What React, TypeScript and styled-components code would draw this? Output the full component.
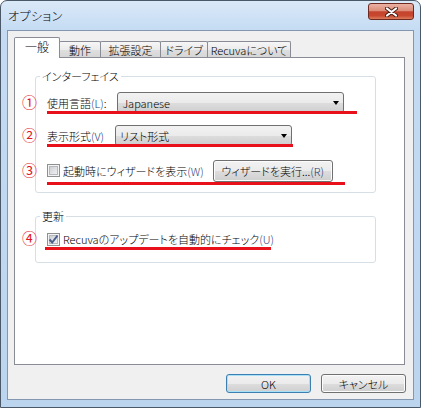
import styled, { createGlobalStyle } from 'styled-components'

const GlobalStyle = createGlobalStyle`
  html, body {
    margin: 0;
    padding: 0;
    background: #fff;
  }
  body {
    font-family: "Noto Sans CJK JP", "Noto Sans", sans-serif;
    font-size: 11px;
    font-weight: 300;
    color: #000;
    font-feature-settings: "palt" 1;
  }
`

const Window = styled.div`
  box-sizing: border-box;
  width: 421px;
  height: 408px;
  display: flex;
  flex-direction: column;
  padding: 0 6px 7px;
  border: 1px solid #4b5868;
  border-radius: 7px 7px 0 0;
  background: linear-gradient(to bottom, #dae9f8 0, #c4dbf3 30px, #bcd5ef 100%);
`

const TitleBar = styled.div`
  height: 29px;
  display: flex;
  justify-content: space-between;
  align-items: flex-start;
`

const Title = styled.span`
  line-height: 29px;
  padding-left: 1px;
  font-size: 12px;
  letter-spacing: 0.4px;
`

const CloseButton = styled.div`
  box-sizing: border-box;
  width: 46px;
  height: 17px;
  margin-top: 2px;
  border: 1px solid #6e2a20;
  border-radius: 3px;
  display: flex;
  align-items: center;
  justify-content: center;
  background: linear-gradient(
    to bottom,
    #eab1a3 0%,
    #dc8d79 45%,
    #c4432c 52%,
    #c8482f 78%,
    #dc7d5f 100%
  );
`

const Client = styled.div`
  flex: 1;
  display: flex;
  flex-direction: column;
  background: #f0f0f0;
  border: 1px solid #8397b0;
  padding: 6px 8px 6px 6px;
`

const TabStrip = styled.div`
  display: flex;
  align-items: flex-end;
  height: 20px;
  position: relative;
  z-index: 1;
`

const Tab = styled.div<{ $active?: boolean; $w: number }>`
  box-sizing: border-box;
  width: ${(p) => p.$w}px;
  height: ${(p) => (p.$active ? 21 : 16)}px;
  margin-bottom: ${(p) => (p.$active ? -1 : 0)}px;
  padding-bottom: ${(p) => (p.$active ? 3 : 0)}px;
  border: 1px solid #898c95;
  border-bottom: none;
  border-radius: 2px 2px 0 0;
  display: flex;
  align-items: center;
  justify-content: center;
  white-space: nowrap;
  font-size: ${(p) => (p.$active ? 12 : 11)}px;
  position: relative;
  z-index: ${(p) => (p.$active ? 2 : 1)};
  background: ${(p) =>
    p.$active ? '#fff' : 'linear-gradient(to bottom, #f6f6f6 0%, #ebebeb 50%, #dfdfdf 51%, #d6d6d6 100%)'};
  & + & {
    margin-left: -1px;
  }
`

const Panel = styled.div`
  flex: 1;
  display: flex;
  flex-direction: column;
  border: 1px solid #898c95;
  background: #fff;
  padding: 11px 28px 0 20px;
`

const Group = styled.fieldset<{ $pb: number }>`
  margin: 0;
  min-width: 0;
  border: 1px solid #d5dfe5;
  border-radius: 3px;
  padding: 3px 0 ${(p) => p.$pb}px 11px;
  & + & {
    margin-top: 16px;
  }
`

const Legend = styled.legend`
  padding: 0 2px;
  margin-left: -7px;
  line-height: 14px;
`

const Row = styled.div<{ $h: number; $gap: number }>`
  position: relative;
  height: ${(p) => p.$h}px;
  display: flex;
  align-items: center;
  gap: ${(p) => p.$gap}px;
  white-space: nowrap;
`

const Mark = styled.span`
  position: absolute;
  left: -25px;
  top: 50%;
  transform: translateY(calc(-50% - 1.5px));
  color: #e3141e;
  font-size: 15px;
  font-weight: 400;
  line-height: 1;
`

const Underline = styled.span<{ $top: number; $left?: number; $w: number }>`
  position: absolute;
  top: ${(p) => p.$top}px;
  left: ${(p) => p.$left ?? 0}px;
  width: ${(p) => p.$w}px;
  height: 3px;
  background: #e8101b;
  z-index: 1;
`

const Key = styled.span`
  color: #1f3a78;
`

const Combo = styled.div<{ $w: number }>`
  box-sizing: border-box;
  width: ${(p) => p.$w}px;
  height: 21px;
  border: 1px solid #707070;
  border-radius: 3px;
  padding: 0 4px 0 4px;
  display: flex;
  align-items: center;
  justify-content: space-between;
  background: linear-gradient(to bottom, #f2f2f2 0%, #ebebeb 50%, #dddddd 51%, #cfcfcf 100%);
`

const Arrow = styled.span`
  width: 0;
  height: 0;
  border-left: 3.5px solid transparent;
  border-right: 3.5px solid transparent;
  border-top: 4px solid #000;
`

const WinButton = styled.div<{ $w: number; $h: number; $default?: boolean }>`
  box-sizing: border-box;
  width: ${(p) => p.$w}px;
  height: ${(p) => p.$h}px;
  border: 1px solid ${(p) => (p.$default ? '#3c7fb1' : '#707070')};
  border-radius: 3px;
  display: flex;
  align-items: center;
  justify-content: center;
  white-space: nowrap;
  box-shadow: inset 0 0 0 1px ${(p) => (p.$default ? '#a8e0f7' : '#fcfcfc')};
  background: linear-gradient(to bottom, #f2f2f2 0%, #ebebeb 50%, #dddddd 51%, #cfcfcf 100%);
`

const CheckLabel = styled.span`
  display: inline-flex;
  align-items: center;
  gap: 3px;
`

const Box = styled.span`
  box-sizing: border-box;
  width: 13px;
  height: 13px;
  border: 1px solid #8e8f8f;
  display: inline-flex;
  align-items: center;
  justify-content: center;
  background: linear-gradient(135deg, #c3c7cd 0%, #e4e5e7 60%, #f6f6f6 100%);
  box-shadow: inset 0 0 0 1px #f4f4f4, inset 0 0 0 2px #b5b9be;
`

const Footer = styled.div`
  display: flex;
  justify-content: flex-end;
  gap: 10px;
  margin-top: 9px;
  margin-right: -1px;
`

const Checkbox = ({ checked }: { checked?: boolean }) => (
  <Box>
    {checked && (
      <svg width="11" height="11" viewBox="0 0 11 11">
        <path d="M1.5 5.5 L4.2 8.5 L9.5 1.5" fill="none" stroke="#4a5e8e" strokeWidth="2" />
      </svg>
    )}
  </Box>
)

const tabs = [
  { label: '一般', w: 46, active: true },
  { label: '動作', w: 42 },
  { label: '拡張設定', w: 61 },
  { label: 'ドライブ', w: 48 },
  { label: 'Recuvaについて', w: 84 },
]

export default function App() {
  return (
    <>
      <GlobalStyle />
      <Window>
        <TitleBar>
          <Title>オプション</Title>
          <CloseButton>
            <svg width="13" height="10" viewBox="0 0 13 10">
              <path d="M2 1.5 L11 8.5 M11 1.5 L2 8.5" stroke="#4a1d15" strokeWidth="4" strokeLinecap="round" />
              <path d="M2 1.5 L11 8.5 M11 1.5 L2 8.5" stroke="#fff" strokeWidth="2.2" strokeLinecap="round" />
            </svg>
          </CloseButton>
        </TitleBar>
        <Client>
          <TabStrip>
            {tabs.map((t) => (
              <Tab key={t.label} $w={t.w} $active={t.active}>
                {t.label}
              </Tab>
            ))}
          </TabStrip>
          <Panel>
            <Group $pb={3}>
              <Legend>インターフェイス</Legend>
              <Row $h={33} $gap={11}>
                <Mark>①</Mark>
                <span>
                  使用言語<Key>(L)</Key>:
                </span>
                <Combo $w={227}>
                  <span>Japanese</span>
                  <Arrow />
                </Combo>
                <Underline $top={25} $w={310} />
              </Row>
              <Row $h={33} $gap={11}>
                <Mark>②</Mark>
                <span>
                  表示形式<Key>(V)</Key>
                </span>
                <Combo $w={177}>
                  <span>リスト形式</span>
                  <Arrow />
                </Combo>
                <Underline $top={25} $w={246} />
              </Row>
              <Row $h={37} $gap={9}>
                <Mark>③</Mark>
                <CheckLabel>
                  <Checkbox />
                  <span>
                    起動時にウィザードを表示<Key>(W)</Key>
                  </span>
                </CheckLabel>
                <WinButton $w={120} $h={22}>
                  ウィザードを実行...<Key>(R)</Key>
                </WinButton>
                <Underline $top={30} $w={298} />
              </Row>
            </Group>
            <Group $pb={10}>
              <Legend>更新</Legend>
              <Row $h={26} $gap={0}>
                <Mark>④</Mark>
                <CheckLabel>
                  <Checkbox checked />
                  <span>
                    Recuvaのアップデートを自動的にチェック<Key>(U)</Key>
                  </span>
                </CheckLabel>
                <Underline $top={21} $left={-2} $w={226} />
              </Row>
            </Group>
          </Panel>
          <Footer>
            <WinButton $w={85} $h={19} $default>
              OK
            </WinButton>
            <WinButton $w={85} $h={19}>
              キャンセル
            </WinButton>
          </Footer>
        </Client>
      </Window>
    </>
  )
}
